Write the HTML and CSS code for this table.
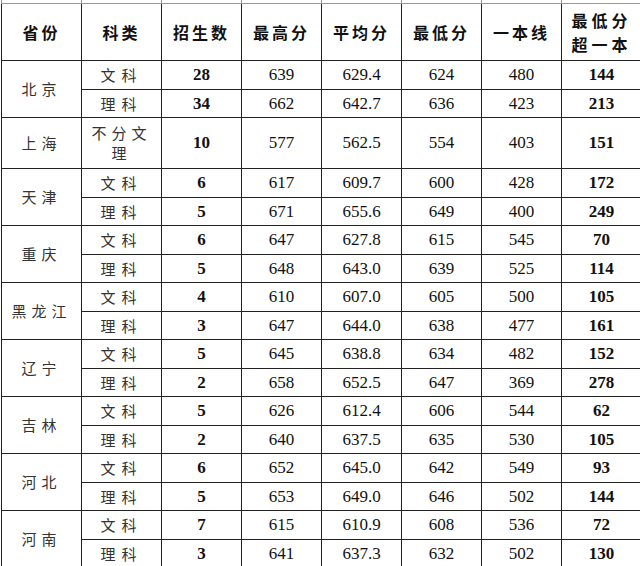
FILE: index.html
```html
<!DOCTYPE html>
<html lang="zh">
<head>
<meta charset="utf-8">
<link rel="stylesheet" href="styles.css">
</head>
<body>
<div class="wrap">
<table class="scores">
<colgroup>
<col class="c"><col class="c"><col class="c"><col class="c"><col class="c"><col class="c"><col class="c"><col class="c">
</colgroup>
<tr class="stub"><td></td><td></td><td></td><td></td><td></td><td></td><td></td><td></td></tr>
<tr class="head">
<th>省份</th><th>科类</th><th>招生数</th><th>最高分</th><th>平均分</th><th>最低分</th><th>一本线</th><th class="two">最低分<br>超一本</th>
</tr>
<tr class="r29"><td rowspan="2" class="prov">北京</td><td class="zh">文科</td><td class="b">28</td><td>639</td><td>629.4</td><td>624</td><td>480</td><td class="b">144</td></tr>
<tr class="r28"><td class="zh">理科</td><td class="b">34</td><td>662</td><td>642.7</td><td>636</td><td>423</td><td class="b">213</td></tr>
<tr class="r51"><td class="prov">上海</td><td class="zh wrapcell">不分文理</td><td class="b">10</td><td>577</td><td>562.5</td><td>554</td><td>403</td><td class="b">151</td></tr>
<tr class="r29"><td rowspan="2" class="prov">天津</td><td class="zh">文科</td><td class="b">6</td><td>617</td><td>609.7</td><td>600</td><td>428</td><td class="b">172</td></tr>
<tr class="r28"><td class="zh">理科</td><td class="b">5</td><td>671</td><td>655.6</td><td>649</td><td>400</td><td class="b">249</td></tr>
<tr class="r29"><td rowspan="2" class="prov">重庆</td><td class="zh">文科</td><td class="b">6</td><td>647</td><td>627.8</td><td>615</td><td>545</td><td class="b">70</td></tr>
<tr class="r28"><td class="zh">理科</td><td class="b">5</td><td>648</td><td>643.0</td><td>639</td><td>525</td><td class="b">114</td></tr>
<tr class="r29"><td rowspan="2" class="prov">黑龙江</td><td class="zh">文科</td><td class="b">4</td><td>610</td><td>607.0</td><td>605</td><td>500</td><td class="b">105</td></tr>
<tr class="r28"><td class="zh">理科</td><td class="b">3</td><td>647</td><td>644.0</td><td>638</td><td>477</td><td class="b">161</td></tr>
<tr class="r29"><td rowspan="2" class="prov">辽宁</td><td class="zh">文科</td><td class="b">5</td><td>645</td><td>638.8</td><td>634</td><td>482</td><td class="b">152</td></tr>
<tr class="r28"><td class="zh">理科</td><td class="b">2</td><td>658</td><td>652.5</td><td>647</td><td>369</td><td class="b">278</td></tr>
<tr class="r29"><td rowspan="2" class="prov">吉林</td><td class="zh">文科</td><td class="b">5</td><td>626</td><td>612.4</td><td>606</td><td>544</td><td class="b">62</td></tr>
<tr class="r28"><td class="zh">理科</td><td class="b">2</td><td>640</td><td>637.5</td><td>635</td><td>530</td><td class="b">105</td></tr>
<tr class="r29"><td rowspan="2" class="prov">河北</td><td class="zh">文科</td><td class="b">6</td><td>652</td><td>645.0</td><td>642</td><td>549</td><td class="b">93</td></tr>
<tr class="r28"><td class="zh">理科</td><td class="b">5</td><td>653</td><td>649.0</td><td>646</td><td>502</td><td class="b">144</td></tr>
<tr class="r29"><td rowspan="2" class="prov">河南</td><td class="zh">文科</td><td class="b">7</td><td>615</td><td>610.9</td><td>608</td><td>536</td><td class="b">72</td></tr>
<tr class="r28"><td class="zh">理科</td><td class="b">3</td><td>641</td><td>637.3</td><td>632</td><td>502</td><td class="b">130</td></tr>
</table>
</div>
</body>
</html>
```

FILE: styles.css
```css
html, body {
  margin: 0;
  padding: 0;
  background: #ffffff;
  overflow: hidden;
}
.wrap {
  padding-left: 1px;
  margin-top: -5px;
}
.scores {
  border-collapse: collapse;
  table-layout: fixed;
  width: 639px;
  font-family: "Liberation Serif", "Noto Sans CJK SC", serif;
  font-size: 17px;
  color: #111;
}
.c { width: 80px; }
.scores td, .scores th {
  border: 1px solid #222;
  padding: 0;
  text-align: center;
  vertical-align: middle;
  line-height: 20px;
}
.stub td { height: 8px; border-top: none; border-color: #999; }
.head th {
  height: 56px;
  font-family: "Noto Sans CJK SC", sans-serif;
  font-weight: 700;
  font-size: 16px;
  letter-spacing: 3px;
  color: #111;
}
.head th.two {
  line-height: 24px;
  letter-spacing: 4px;
}
.r29 td { height: 28px; }
.r28 td { height: 27px; }
.r51 td { height: 50px; }
.prov, .zh {
  font-family: "Noto Sans CJK SC", sans-serif;
  font-size: 15px;
  letter-spacing: 5px;
  color: #333;
}
.zh { letter-spacing: 6px; padding-left: 6px; }
.wrapcell { line-height: 22px; padding: 0 8px 0 12px; letter-spacing: 5px; }
.b { font-weight: 700; }
```
